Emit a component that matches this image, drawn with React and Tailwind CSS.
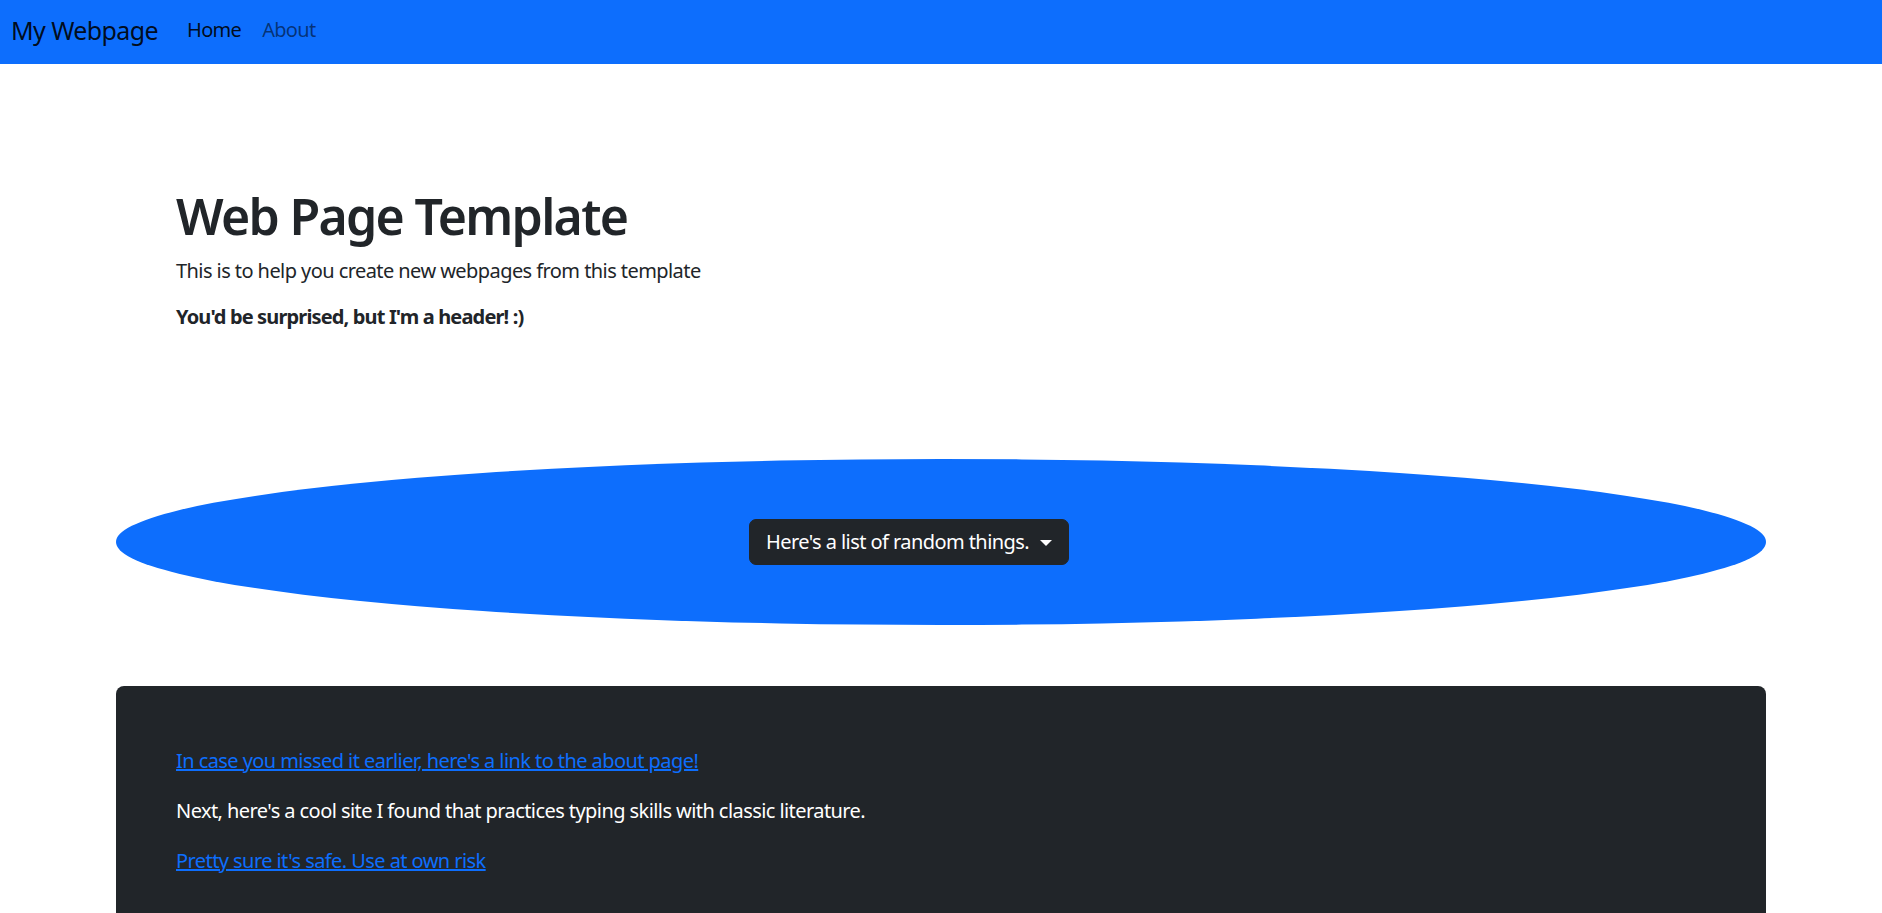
export default function App() {
  return (
    <div className="min-h-screen bg-white text-[20px] leading-[30px] tracking-[-0.57px] text-[#212529] font-['Noto_Sans',sans-serif]">
      <nav className="flex h-16 items-center bg-[#0d6efd] px-[11px] pb-[4px]">
        <a href="#" className="mr-[29px] text-[25px] leading-[37px] tracking-[-0.6px] text-black/90">
          My Webpage
        </a>
        <div className="flex gap-[21px] tracking-[-0.7px]">
          <a href="#" className="text-black/90">Home</a>
          <a href="#" className="text-black/55">About</a>
        </div>
      </nav>

      <main className="mx-auto w-[1650px]">
        <section className="p-[60px] pt-[122px] pb-[127px]">
          <h1 className="mb-[10px] text-[50px] font-semibold leading-[60px] tracking-[-1.7px]">
            Web Page Template
          </h1>
          <p className="mb-[16px]">
            This is to help you create new webpages from this template
          </p>
          <p className="font-bold tracking-[-0.85px]">You'd be surprised, but I'm a header! :)</p>
        </section>

        <div className="flex h-[166px] items-center rounded-[50%] bg-[#0d6efd] pl-[633px]">
          <button
            type="button"
            className="flex h-[46px] items-center rounded-[7px] border border-[#212529] bg-[#212529] px-[16px] text-white"
          >
            Here's a list of random things.
            <span className="ml-[11px] mt-[2px] h-0 w-0 border-x-[6px] border-t-[6px] border-x-transparent border-t-white" />
          </button>
        </div>

        <section className="mt-[61px] rounded-t-[8px] bg-[#212529] px-[60px] pb-[60px] pt-[60px] text-white">
          <p className="mb-[20px]">
            <a href="#" className="text-[#0d6efd] underline">
              In case you missed it earlier, here's a link to the about page!
            </a>
          </p>
          <p className="mb-[20px]">
            Next, here's a cool site I found that practices typing skills with classic literature.
          </p>
          <p>
            <a href="#" className="text-[#0d6efd] underline">
              Pretty sure it's safe. Use at own risk
            </a>
          </p>
        </section>
      </main>
    </div>
  );
}
